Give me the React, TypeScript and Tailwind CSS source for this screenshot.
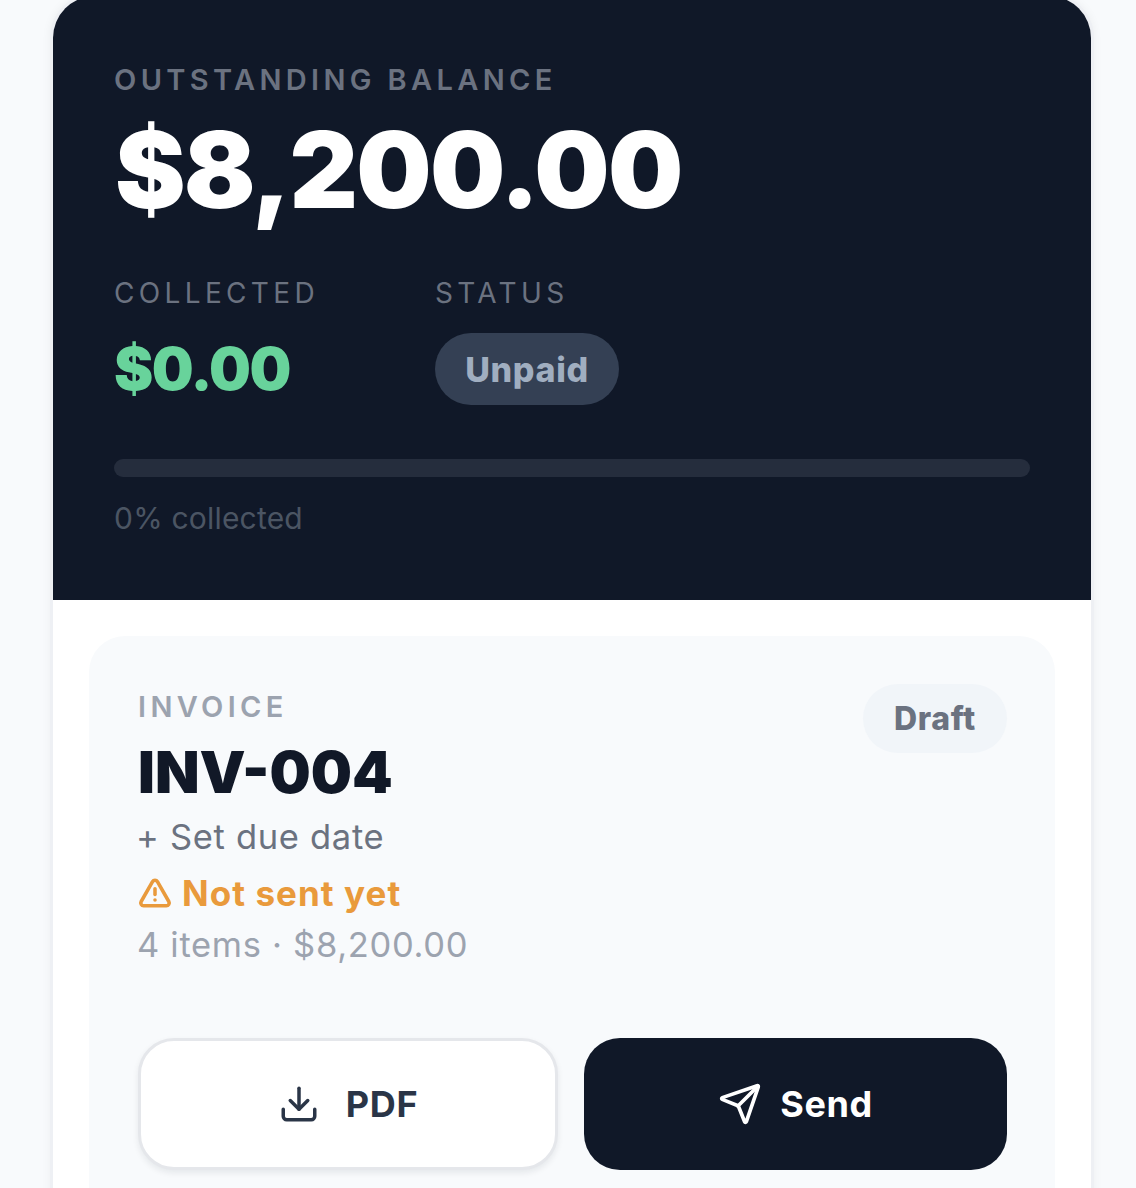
import { Download, Send, TriangleAlert } from 'lucide-react';

const font = { fontFamily: 'Inter, "Liberation Sans", sans-serif' };

export default function App() {
  return (
    <div style={font} className="h-[1188px] w-[1136px] overflow-hidden bg-[#f8fafc] pl-[53px]">
      <div className="-mt-[4px] w-[1038px] rounded-[42px] bg-white shadow-[0_0_0_3px_#eef0f4,0_0_10px_3px_rgba(15,23,42,0.05)]">
        <div className="h-[604px] rounded-t-[42px] bg-[#101828] px-[61px] pt-[67px]">
          <div className="text-[29px] leading-[34px] font-semibold tracking-[0.15em] text-[#6b7280]">OUTSTANDING BALANCE</div>
          <div className="mt-[13px] ml-[1px] text-[106px] leading-[120px] font-black tracking-[-0.017em] text-white">$8,200.00</div>
          <div className="mt-[47px] flex">
            <div className="w-[321px]">
              <div className="text-[28px] leading-[32px] tracking-[0.155em] text-[#6b7280]">COLLECTED</div>
              <div className="mt-[24px] text-[59px] leading-[72px] font-black tracking-[-0.025em] text-[#68d39b]">$0.00</div>
            </div>
            <div>
              <div className="text-[28px] leading-[32px] tracking-[0.155em] text-[#6b7280]">STATUS</div>
              <div className="mt-[24px] flex h-[72px] w-[184px] items-center justify-center rounded-full bg-[#344054] text-[34px] font-extrabold tracking-[0.02em] text-[#a0aec0]">Unpaid</div>
            </div>
          </div>
          <div className="mt-[54px] h-[18px] rounded-full bg-[#252d3d]"></div>
          <div className="mt-[23px] text-[30px] leading-[36px] tracking-[0.2px] text-[#4b5563]">0% collected</div>
        </div>
        <div className="px-[36px] pt-[36px]">
          <div className="h-[700px] rounded-[36px] bg-[#f8fafc] pt-[48px] pr-[48px] pl-[49px]">
            <div className="flex items-start justify-between">
              <div>
                <div className="mt-[7px] text-[29px] leading-[32px] font-semibold tracking-[0.15em] text-[#9ca3af]">INVOICE</div>
                <div className="mt-[13px] text-[58px] leading-[72px] font-black text-[#111827]">INV-004</div>
                <div className="mt-[9px] -ml-[2px] text-[34.5px] leading-[40px] tracking-[0.02em] text-[#6b7280]">+ Set due date</div>
              </div>
              <div className="flex h-[69px] w-[144px] items-center justify-center rounded-full bg-[#f1f5f9] text-[32px] font-extrabold tracking-[0.02em] text-[#6b7280]">Draft</div>
            </div>
            <div className="mt-[16px] flex items-center gap-[10px] text-[35px] leading-[40px] font-bold tracking-[0.03em] text-[#e99a3c]">
              <TriangleAlert size={34} strokeWidth={2.5} />
              <span>Not sent yet</span>
            </div>
            <div className="mt-[12px] -ml-[1px] text-[34.5px] leading-[40px] tracking-[0.02em] text-[#9ca3af]">4 items · $8,200.00</div>
            <div className="mt-[73px] flex gap-[26px]">
              <button className="flex h-[132px] w-[420px] shrink-0 items-center justify-center gap-[26px] rounded-[36px] border-[3px] border-[#e5e7eb] bg-white text-[36px] font-bold tracking-[0.02em] text-[#2a3547] shadow-[0_3px_6px_rgba(15,23,42,0.08)]">
                <Download size={42} strokeWidth={2} />
                <span>PDF</span>
              </button>
              <button className="flex h-[132px] w-[423px] shrink-0 items-center justify-center gap-[18px] rounded-[36px] bg-[#101828] text-[36px] font-bold tracking-[0.015em] text-white">
                <Send size={44} strokeWidth={2} />
                <span>Send</span>
              </button>
            </div>
          </div>
        </div>
      </div>
    </div>
  );
}
